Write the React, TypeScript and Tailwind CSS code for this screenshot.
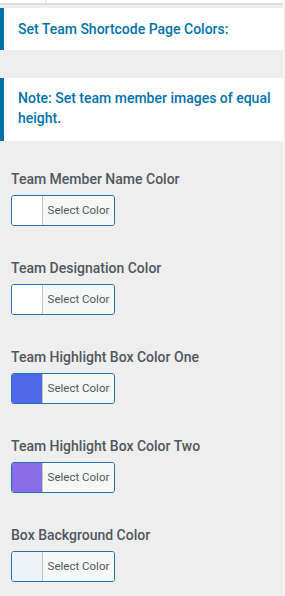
import React from "react";

const items = [
  { label: "Team Member Name Color", color: "bg-white" },
  { label: "Team Designation Color", color: "bg-white" },
  { label: "Team Highlight Box Color One", color: "bg-[#4f68e9]" },
  { label: "Team Highlight Box Color Two", color: "bg-[#8c6de8]" },
  { label: "Box Background Color", color: "bg-[#eef3f8]" },
];

export default function App() {
  return (
    <div
      className="w-[285px] h-[596px] bg-[#eeeeee] overflow-hidden flex"
      style={{ fontFamily: "Roboto, 'Liberation Sans', sans-serif" }}
    >
      <div className="w-[283px] flex flex-col">
        <div className="h-[3px] bg-white flex">
          <div className="w-[46px] border-r border-[#dddddd]" />
        </div>
        <div className="h-[2px] bg-[#dcdcdc]" />
        <div className="h-[3px]" />
        <div className="h-[42px] bg-white border-l-4 border-[#0073aa] pl-[14px] flex items-center">
          <span className="text-[14px] font-medium text-[#0073aa]">Set Team Shortcode Page Colors:</span>
        </div>
        <div className="h-[28px]" />
        <div className="h-[63px] bg-white border-l-4 border-[#0073aa] pl-[14px] pr-2 pb-[3px] flex items-center">
          <span className="text-[14px] font-medium text-[#0073aa] leading-[20px]">
            Note: Set team member images of equal height.
          </span>
        </div>
        <div className="flex flex-col pl-[11px] pt-[29px] gap-[33px]">
          {items.map((it) => (
            <div key={it.label} className="flex flex-col gap-[7px]">
              <div className="text-[14px] font-medium text-[#50575e] leading-[18px]">{it.label}</div>
              <div className="w-[104px] h-[31px] border border-[#2271b1] rounded-[3px] flex overflow-hidden">
                <div className={`w-[31px] ${it.color} border-r border-[#c3c4c7]`} />
                <div className="flex-1 bg-[#f6f7f7] flex items-center justify-center text-[11.5px] text-[#50575e]">
                  Select Color
                </div>
              </div>
            </div>
          ))}
        </div>
      </div>
      <div className="w-[2px] bg-[#f5f5f5]" />
    </div>
  );
}
